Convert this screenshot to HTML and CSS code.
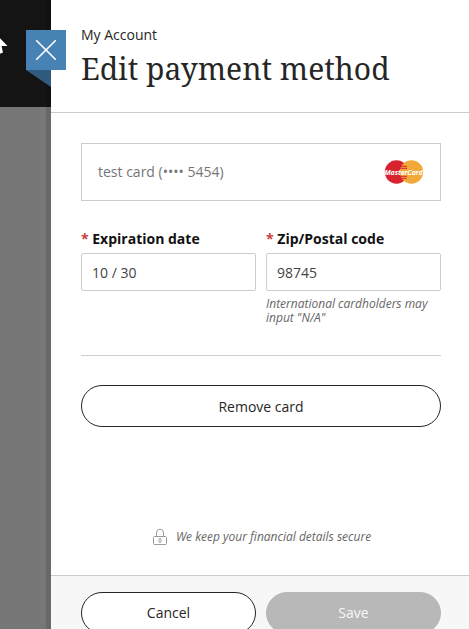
FILE: index.html
```html
<!DOCTYPE html>
<html lang="en">

<head>
    <meta charset="UTF-8">
    <meta name="viewport" content="width=device-width, initial-scale=1.0">
    <title>Edit payment method</title>
    <link rel="stylesheet" href="styles.css">
</head>

<body>
    <div class="backdrop">
        <div class="backdrop-top"></div>
        <svg class="pointer" width="8" height="20" viewBox="0 0 8 20">
            <path d="M0 2.2 L7.5 10 L1.5 10 L3 16.5 L0 17.8 Z" fill="#fff" />
        </svg>
    </div>

    <div class="panel">
        <button class="close-button" aria-label="Close">
            <svg width="22" height="22" viewBox="0 0 22 22">
                <path d="M1.2 1.2 L20.8 20.8 M20.8 1.2 L1.2 20.8" stroke="#fff" stroke-width="1.6" />
            </svg>
        </button>

        <header class="panel-header">
            <div class="breadcrumb">My Account</div>
            <h1>Edit payment method</h1>
        </header>

        <main class="panel-body">
            <div class="card-box">
                <span>test card (•••• 5454)</span>
                <svg class="card-logo" width="40" height="24" viewBox="0 0 40 24">
                    <circle cx="12.5" cy="12" r="11.7" fill="#d9222f" />
                    <circle cx="27.5" cy="12" r="11.7" fill="#f2a93b" />
                    <path d="M17 6.3h6 M16.2 8.3h7 M16 16.3h7 M17.2 18.3h5.5" stroke="#d9222f" stroke-width="1" />
                    <text class="card-brand" x="19.5" y="14.5" text-anchor="middle">MasterCard</text>
                </svg>
            </div>

            <div class="fields">
                <div class="field">
                    <label for="expiration"><span class="required">*</span> Expiration date</label>
                    <input type="text" id="expiration" value="10 / 30">
                </div>
                <div class="field">
                    <label for="zip"><span class="required">*</span> Zip/Postal code</label>
                    <input type="text" id="zip" value="98745">
                    <p class="hint">International cardholders may input "N/A"</p>
                </div>
            </div>

            <div class="remove-row">
                <button class="button">Remove card</button>
            </div>

            <div class="secure">
                <svg width="15" height="18" viewBox="0 0 15 18" fill="none" stroke="#999">
                    <rect x="0.5" y="8.5" width="13" height="8" rx="1" />
                    <path d="M3.5 8.5 V5 a3.5 3.8 0 0 1 7 0 V8.5" />
                    <rect x="6" y="10.5" width="2" height="4" rx="1" />
                </svg>
                <span>We keep your financial details secure</span>
            </div>
        </main>

        <footer class="panel-footer">
            <button class="button">Cancel</button>
            <button class="button save-button" disabled>Save</button>
        </footer>
    </div>
</body>

</html>
```
FILE: styles.css
```css
* {
    box-sizing: border-box;
}

body {
    margin: 0;
    height: 629px;
    overflow: hidden;
    display: flex;
    font-family: 'Open Sans', sans-serif;
    font-size: 14px;
    color: #262626;
    background-color: #fff;
}

.backdrop {
    position: relative;
    width: 51px;
    flex-shrink: 0;
    background-color: #777;
}

.backdrop::after {
    content: "";
    position: absolute;
    top: 0;
    right: 0;
    width: 5px;
    height: 100%;
    background-color: rgba(0, 0, 0, 0.12);
}

.backdrop-top {
    height: 107px;
    background-color: #141414;
}

.pointer {
    position: absolute;
    top: 36px;
    left: 0;
}

.panel {
    position: relative;
    flex: 1;
    min-width: 0;
    display: flex;
    flex-direction: column;
    height: 634px;
}

.close-button {
    position: absolute;
    top: 30px;
    left: -25px;
    width: 40px;
    height: 40px;
    padding: 0;
    border: none;
    background-color: #4682b4;
    display: flex;
    align-items: center;
    justify-content: center;
}

/* folded ribbon corner */
.close-button::after {
    content: "";
    position: absolute;
    top: 40px;
    left: 0;
    width: 25px;
    height: 17px;
    background-color: #315b7e;
    clip-path: polygon(0 0, 100% 0, 100% 100%);
}

.panel-header {
    height: 113px;
    padding: 25px 28px 0 30px;
    border-bottom: 1px solid #ccc;
}

.breadcrumb {
    line-height: 20px;
}

h1 {
    margin: 4px 0 0;
    font-family: 'Noto Serif', 'DejaVu Serif Condensed', 'DejaVu Serif', serif;
    font-size: 30px;
    font-weight: 400;
    line-height: 40px;
    white-space: nowrap;
}

.panel-body {
    padding: 30px 28px 0 30px;
    height: 462px;
}

.card-box {
    display: flex;
    align-items: center;
    justify-content: space-between;
    height: 58px;
    padding: 0 16px;
    border: 1px solid #ccc;
    color: #757575;
}

.card-box span {
    padding-bottom: 2px;
}

.card-logo {
    overflow: visible;
}

.card-brand {
    font-family: 'Open Sans', sans-serif;
    font-size: 7px;
    font-style: italic;
    font-weight: 700;
    letter-spacing: -0.1px;
    fill: #fff;
}

.fields {
    display: grid;
    grid-template-columns: 1fr 1fr;
    gap: 10px;
    height: 155px;
    padding-top: 28px;
    border-bottom: 1px solid #ccc;
}

.field label {
    display: block;
    margin-bottom: 4px;
    font-weight: 700;
    line-height: 20px;
    color: #111;
}

.required {
    color: #c9413a;
}

.field input {
    display: block;
    width: 100%;
    height: 38px;
    padding: 0 10px;
    border: 1px solid #ccc;
    border-radius: 2px;
    font: inherit;
    color: #444;
}

.hint {
    margin: 6px 0 0;
    font-size: 12px;
    font-style: italic;
    line-height: 14px;
    color: #666;
}

.remove-row {
    display: flex;
    padding-top: 29px;
}

.button {
    flex: 1;
    height: 42px;
    border: 1px solid #262626;
    border-radius: 21px;
    background-color: #fff;
    font: inherit;
    color: #262626;
}

.secure {
    display: flex;
    align-items: center;
    justify-content: center;
    gap: 8px;
    margin-top: 100px;
    padding-left: 2px;
    font-size: 12px;
    font-style: italic;
    line-height: 20px;
    color: #666;
}

.panel-footer {
    display: flex;
    gap: 10px;
    height: 59px;
    padding: 16px 28px 0 30px;
    border-top: 1px solid #ccc;
    background-color: #f7f7f7;
}

.panel-footer .button {
    padding-bottom: 3px;
}

.panel-footer .save-button {
    border-color: #b8b8b8;
    background-color: #b8b8b8;
    color: #f7f7f7;
}
```
